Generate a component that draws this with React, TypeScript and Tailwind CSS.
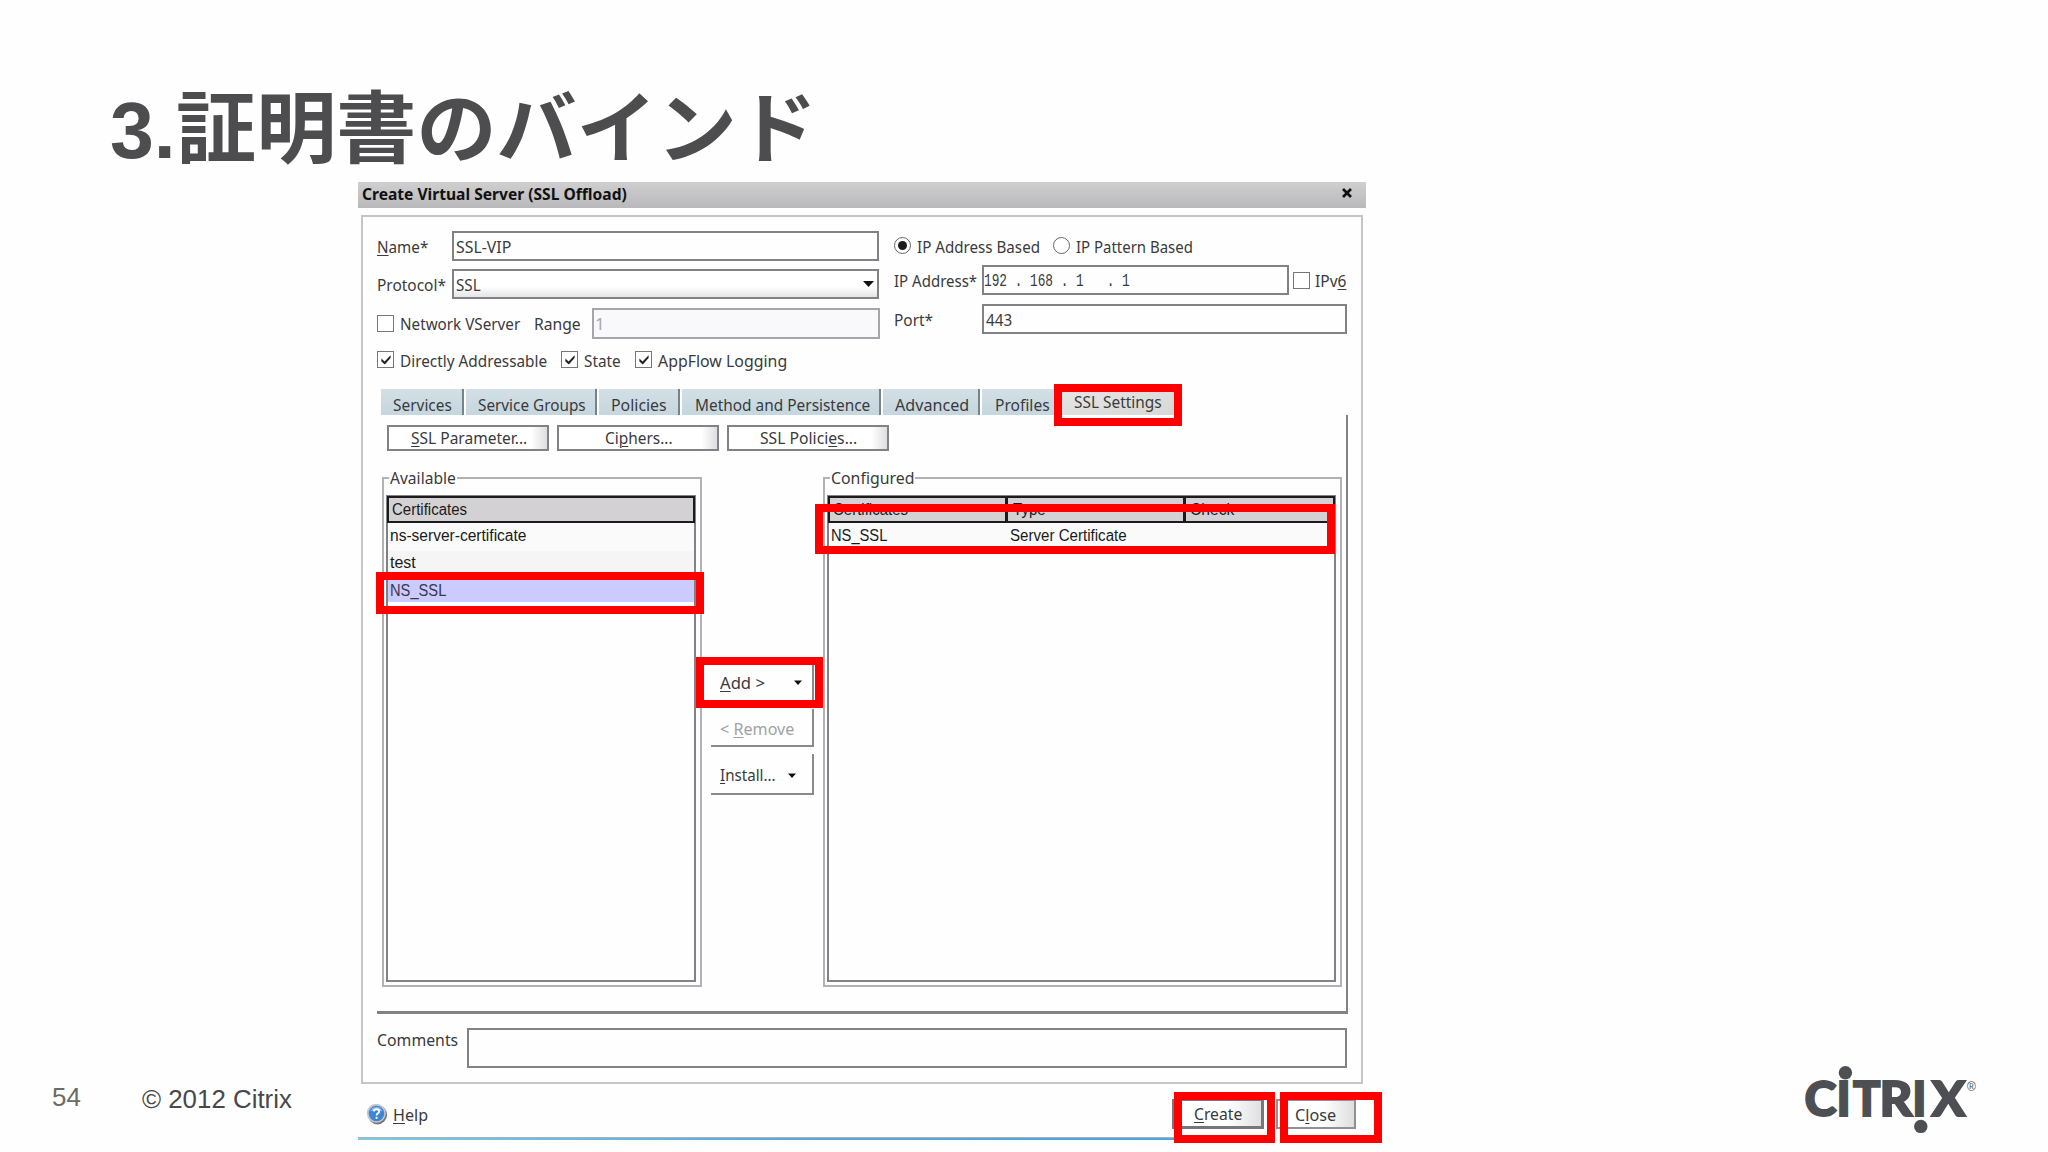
import { useLayoutEffect, useRef, useState, type ReactNode } from "react";
import clsx from "clsx";

/* Text run that is condensed or widened to take exactly `w` pixels; `dy` nudges its baseline. */
function Fit({ w, dy = 0, children, className }: { w: number; dy?: number; children: ReactNode; className?: string }) {
  const ref = useRef<HTMLSpanElement>(null);
  const [scale, setScale] = useState(1);
  useLayoutEffect(() => {
    if (ref.current) setScale(w / ref.current.offsetWidth);
  }, [w]);
  return (
    <span className={clsx("inline-block shrink-0 whitespace-pre", className)} style={{ width: w }}>
      <span ref={ref} className="inline-block origin-left" style={{ transform: `translateY(${dy}px) scaleX(${scale})` }}>
        {children}
      </span>
    </span>
  );
}

function U({ children }: { children: ReactNode }) {
  return <span className="underline decoration-1 underline-offset-2">{children}</span>;
}

function Check({ on }: { on?: boolean }) {
  return (
    <span className="flex size-[17px] shrink-0 items-center justify-center border-[1.5px] border-[#77777b] bg-white">
      {on && (
        <svg viewBox="0 0 12 12" className="size-3">
          <path d="M1.4 4.6 L4.6 7.4 L10.6 1.2 V4 L4.8 10.6 L1.4 7.6Z" fill="#222" />
        </svg>
      )}
    </span>
  );
}

function Radio({ on }: { on?: boolean }) {
  return (
    <span className="flex size-[17px] shrink-0 items-center justify-center rounded-full border-[1.5px] border-[#66666a] bg-white">
      {on && <span className="size-[9px] rounded-full bg-[#1c1c1c]" />}
    </span>
  );
}

function Field({ className, children }: { className: string; children?: ReactNode }) {
  return <div className={clsx("flex shrink-0 items-center border-2 border-[#828286]", className)}>{children}</div>;
}

function Tab({ w, tw, className, children }: { w: string; tw: number; className?: string; children: string }) {
  return (
    <div
      className={clsx(
        "flex h-[26px] shrink-0 items-center bg-linear-to-b from-[#d3dfe5] to-[#c5d6de] pt-[3px]",
        w,
        className ?? "mr-[2px] border-r-2 border-[#76838a]",
      )}
    >
      <Fit w={tw} dy={1}>{children}</Fit>
    </div>
  );
}

function PushButton({ tw, children }: { tw: number; children: ReactNode }) {
  return (
    <div className="flex h-[26px] w-[162px] shrink-0 items-center justify-center border-2 border-[#828286] bg-linear-to-r from-white from-90% to-[#dedee0] pl-px">
      <Fit w={tw}>{children}</Fit>
    </div>
  );
}

function GroupBox({ title, tw, className, children }: { title: string; tw: number; className: string; children: ReactNode }) {
  return (
    <div className={clsx("relative h-[510px] shrink-0 border-2 border-[#b2b2b6] px-[2px] pr-[4px] pt-4", className)}>
      <div className="absolute -top-[13px] left-[5px] bg-[#fefefe] px-[1px] leading-6">
        <Fit w={tw}>{title}</Fit>
      </div>
      <div className="flex h-[487px] flex-col border-2 border-[#828286] font-['Liberation_Sans'] text-[16px] text-[#1b1b1b]">
        {children}
      </div>
    </div>
  );
}

function Arrow() {
  return (
    <svg viewBox="0 0 8 5" className="h-[5px] w-2 shrink-0">
      <path d="M0 .4H8L4 5Z" fill="#111" />
    </svg>
  );
}

function Mark({ className }: { className: string }) {
  return <div className={clsx("absolute border-[8px] border-[#ff0000]", className)} />;
}

function Dialog() {
  return (
    <div className="flex w-[1008px] shrink-0 flex-col font-['Noto_Sans'] text-[17px] text-[#3a3a3c]">
      <div className="flex h-[26px] shrink-0 items-center justify-between bg-linear-to-b from-[#cfcfd0] to-[#b9b9bb] pr-[14px] pb-[4px] pl-[4px] text-[#111]">
        <Fit w={265} dy={1} className="text-[16px] font-bold">
          Create Virtual Server (SSL Offload)
        </Fit>
        <svg viewBox="0 0 10 10" className="size-[10px]">
          <path d="M1 1 9 9M9 1 1 9" stroke="#111" strokeWidth="2.7" />
        </svg>
      </div>

      <div className="mt-[7px] ml-[3px] flex h-[869px] w-[1002px] shrink-0 flex-col border-2 border-[#c6c6ca] pl-[14px]">
        <div className="flex h-[172px] shrink-0 pt-[14px]">
          <div className="w-[503px] shrink-0">
            <div className="flex h-[30px] items-center">
              <Fit w={51} dy={1} className="mr-6"><U>N</U>ame*</Fit>
              <Field className="h-[30px] w-[427px] pl-[2px]"><Fit w={55} dy={1}>SSL-VIP</Fit></Field>
            </div>
            <div className="mt-2 flex h-[30px] items-center">
              <Fit w={69} dy={1} className="mr-[6px]">Protocol*</Fit>
              <Field className="h-[30px] w-[427px] justify-between bg-linear-to-b from-white from-60% to-[#e4e4e5] pr-[3px] pl-[2px]">
                <Fit w={25} dy={1}>SSL</Fit>
                <svg viewBox="0 0 11 6" className="h-[6px] w-[11px]"><path d="M0 0H11L5.5 6Z" fill="#111" /></svg>
              </Field>
            </div>
            <div className="mt-[9px] flex h-[31px] items-center">
              <Check />
              <Fit w={120} className="mr-[14px] ml-[6px]">Network VServer</Fit>
              <Fit w={47} className="mr-[11px]">Range</Fit>
              <div className="flex h-[31px] w-[288px] items-center border-2 border-[#a6a6aa] bg-[#f9f8fa] pl-px text-[#a8a8ab]">1</div>
            </div>
            <div className="mt-3 flex h-[17px] items-center">
              <Check on />
              <Fit w={147} dy={1} className="mr-[14px] ml-[6px]">Directly Addressable</Fit>
              <Check on />
              <Fit w={37} dy={1} className="mr-[14px] ml-[6px]">State</Fit>
              <Check on />
              <Fit w={129} dy={1} className="ml-[6px]">AppFlow Logging</Fit>
            </div>
          </div>
          <div className="ml-[14px] w-[454px] shrink-0">
            <div className="flex h-[29px] items-center">
              <Radio on />
              <Fit w={123} dy={1} className="mr-[13px] ml-[6px]">IP Address Based</Fit>
              <Radio />
              <Fit w={117} dy={1} className="ml-[6px]">IP Pattern Based</Fit>
            </div>
            <div className="mt-[5px] flex h-[30px] items-center">
              <Fit w={83} dy={1} className="mr-[5px]">IP Address*</Fit>
              <Field className="mr-[4px] h-[30px] w-[307px]">
                <Fit w={146} dy={1} className="font-['Liberation_Mono'] text-[17.5px]">{"192 . 168 . 1   . 1"}</Fit>
              </Field>
              <Check />
              <Fit w={31} dy={1} className="ml-[5px]">IPv<U>6</U></Fit>
            </div>
            <div className="mt-[9px] flex h-[29px] items-center">
              <Fit w={39} dy={1} className="mr-[49px]">Port*</Fit>
              <Field className="h-[30px] w-[365px] pl-[2px]"><Fit w={26} dy={1}>443</Fit></Field>
            </div>
          </div>
        </div>

        <div className="flex h-[26px] shrink-0 pl-[4px]">
          <Tab w="w-[83px] pl-[12px]" tw={59}>Services</Tab>
          <Tab w="w-[131px] pl-[12px]" tw={108}>Service Groups</Tab>
          <Tab w="w-[81px] pl-[12px]" tw={56}>Policies</Tab>
          <Tab w="w-[199px] pl-[13px]" tw={175}>Method and Persistence</Tab>
          <Tab w="w-[97px] pl-[12px]" tw={74}>Advanced</Tab>
          <Tab w="w-[77px] pl-[13px]" tw={55} className="border-0">Profiles</Tab>
          <div className="flex h-[26px] w-[115px] items-center bg-linear-to-br from-[#e6e6e6] to-[#d8d8d6] pb-[3px] pl-[15px]">
            <Fit w={88} dy={1}>SSL Settings</Fit>
          </div>
        </div>

        <div className="h-[599px] w-[971px] shrink-0 border-r-[2.5px] border-b-[3px] border-[#828284] pt-[10px]">
          <div className="flex gap-[8px] pl-[10px]">
            <PushButton tw={116}><U>S</U>SL Parameter...</PushButton>
            <PushButton tw={68}>Ci<U>p</U>hers...</PushButton>
            <PushButton tw={97}>SSL Polici<U>e</U>s...</PushButton>
          </div>
          <div className="mt-[26px] flex pl-[5px]">
            <GroupBox title="Available" tw={66} className="w-[320px]">
              <div className="-mx-px -mt-px flex h-[27px] items-center border-2 border-[#1c1c1c] bg-[#d3d1d3] pl-[3px]">
                <Fit w={75}>Certificates</Fit>
              </div>
              <div className="flex h-[28px] items-center bg-[#fafafa] pb-[3px] pl-[2px]"><Fit w={136}>ns-server-certificate</Fit></div>
              <div className="flex h-[27px] items-center bg-[#f5f5f6] pb-[3px] pl-[2px]"><Fit w={26}>test</Fit></div>
              <div className="mt-px flex h-[23px] items-center bg-[#cbcbff] pl-[2px] text-[#3a3848]"><Fit w={56}>NS_SSL</Fit></div>
            </GroupBox>

            <div className="flex w-[121px] shrink-0 flex-col pt-[188px] pl-[9px]">
              <div className="flex h-[36px] w-[103px] items-center border-r-2 border-[#8a8a8c] pb-px pl-[9px]">
                <Fit w={45} className="mr-[29px]"><U>A</U>dd &gt;</Fit>
                <Arrow />
              </div>
              <div className="mt-[8px] flex h-[38px] w-[103px] items-center border-r-2 border-b-2 border-[#8a8a8c] pt-[3px] pl-[9px] text-[#a2a2a5]">
                <Fit w={74}>&lt; <U>R</U>emove</Fit>
              </div>
              <div className="mt-[7px] flex h-[41px] w-[103px] items-center border-r-2 border-b-2 border-[#8a8a8c] pt-[3px] pl-[9px]">
                <Fit w={56} className="mr-[12px]"><U>I</U>nstall...</Fit>
                <Arrow />
              </div>
            </div>

            <GroupBox title="Configured" tw={83} className="w-[519px]">
              <div className="-mx-px -mt-px flex h-[27px] items-stretch border-2 border-[#1c1c1c] bg-[#d3d1d3]">
                <div className="flex w-[178px] items-center border-r-[3px] border-[#1c1c1c] pl-[3px]"><Fit w={75}>Certificates</Fit></div>
                <div className="flex w-[178px] items-center border-r-[3px] border-[#1c1c1c] pl-[5px]"><Fit w={33}>Type</Fit></div>
                <div className="flex items-center pl-[4px]"><Fit w={44}>Check</Fit></div>
              </div>
              <div className="flex h-[28px] items-center bg-[#fafafa] pb-[3px] pl-[2px]">
                <Fit w={56} className="mr-[123px]">NS_SSL</Fit>
                <Fit w={117}>Server Certificate</Fit>
              </div>
            </GroupBox>
          </div>
        </div>

        <div className="mt-[14px] flex">
          <Fit w={81} dy={-1} className="mr-[9px]">Comments</Fit>
          <Field className="h-[40px] w-[880px]" />
        </div>
      </div>

      <div className="flex h-[53px] shrink-0 items-center pt-[6px] pl-[8px]">
        <svg viewBox="0 0 22 22" className="size-[22px]">
          <circle cx="11.5" cy="11.8" r="9.6" fill="#77787c" />
          <circle cx="10.3" cy="10.3" r="9.5" fill="#c3c8d0" />
          <circle cx="10.5" cy="10.5" r="7.8" fill="#3d86d4" />
          <path d="M4.5 8.5a6.3 6.3 0 0 1 12 0Q10.5 6 4.5 8.5Z" fill="#86b8ea" />
          <path d="M7.8 8.4C8 5.5 13.2 5.5 13.2 8.4c0 2-2.6 1.9-2.6 4" fill="none" stroke="#fff" strokeWidth="1.8" />
          <circle cx="10.6" cy="14.8" r="1.1" fill="#fff" />
        </svg>
        <Fit w={35} dy={1} className="mr-[744px] ml-[5px]"><U>H</U>elp</Fit>
        <div className="flex h-[30px] w-[92px] items-center justify-center border-2 border-r-[3px] border-b-[3px] border-[#77777a] bg-linear-to-r from-white from-60% to-[#e0e0e2]">
          <Fit w={48} dy={1}><U>C</U>reate</Fit>
        </div>
        <div className="ml-[12px] flex h-[30px] w-[80px] items-center justify-center border-2 border-[#919193] bg-linear-to-r from-white from-60% to-[#dededf] pr-px">
          <Fit w={41} dy={1}>C<U>l</U>ose</Fit>
        </div>
      </div>
      <div className="h-px w-[917px] bg-[#a5b4bc]" />
      <div className="h-[2px] w-[917px] bg-linear-to-r from-[#7ccbe0] via-[#55a9d8] to-[#4da2e6]" />
    </div>
  );
}

function CitrixLogo() {
  return (
    <svg viewBox="0 0 180 74" className="h-[74px] w-[180px]" fill="#4d4f53">
      <g fontFamily="Lato" fontWeight="900" fontSize="47" stroke="#4d4f53" strokeWidth="1.8">
        <text x="2.6" y="50.3" textLength="32" lengthAdjust="spacingAndGlyphs">C</text>
        <text x="34.4" y="50.3">I</text>
        <text x="51" y="50.3" textLength="27.5" lengthAdjust="spacingAndGlyphs">T</text>
        <text x="77.6" y="50.3" textLength="33" lengthAdjust="spacingAndGlyphs">R</text>
        <text x="110.2" y="50.3">I</text>
        <text x="129.5" y="50.3" textLength="34" lengthAdjust="spacingAndGlyphs">X</text>
      </g>
      <circle cx="43.4" cy="6.8" r="6.7" />
      <circle cx="118.8" cy="60.4" r="6.7" />
      <text x="165" y="24.5" fontFamily="Liberation Sans" fontSize="12">®</text>
    </svg>
  );
}

export default function App() {
  return (
    <div className="relative flex h-[1152px] w-[2048px] flex-col overflow-hidden bg-[#fefefe]">
      <h1 className="flex h-[182px] shrink-0 items-baseline pt-[84px] pl-[110px] font-bold text-[#4d4d4f]">
        <Fit w={66} className="font-['Liberation_Sans'] text-[80px] leading-[80px]">3.</Fit>
        <Fit w={641} dy={-1} className="font-['Noto_Sans_CJK_JP',sans-serif] text-[78px] leading-[80px]">証明書のバインド</Fit>
      </h1>
      <div className="flex h-[970px] shrink-0">
        <div className="flex w-[358px] shrink-0 items-end pb-[39px] pl-[52px] font-['Liberation_Sans'] text-[25px] leading-7">
          <Fit w={29} className="mr-[61px] mb-[2px] text-[#6b6b62]">54</Fit>
          <Fit w={150} className="text-[#48484a]">© 2012 Citrix</Fit>
        </div>
        <Dialog />
        <div className="flex flex-1 items-end justify-end pr-[66px] pb-[12px]">
          <CitrixLogo />
        </div>
      </div>

      <Mark className="top-[384px] left-[1054px] h-[42px] w-[128px]" />
      <Mark className="top-[504px] left-[815px] h-[50px] w-[520px]" />
      <Mark className="top-[572px] left-[376px] h-[42px] w-[328px]" />
      <Mark className="top-[657px] left-[696px] h-[51px] w-[127px]" />
      <Mark className="top-[1092px] left-[1174px] h-[51px] w-[101px]" />
      <Mark className="top-[1092px] left-[1280px] h-[51px] w-[102px]" />
    </div>
  );
}
